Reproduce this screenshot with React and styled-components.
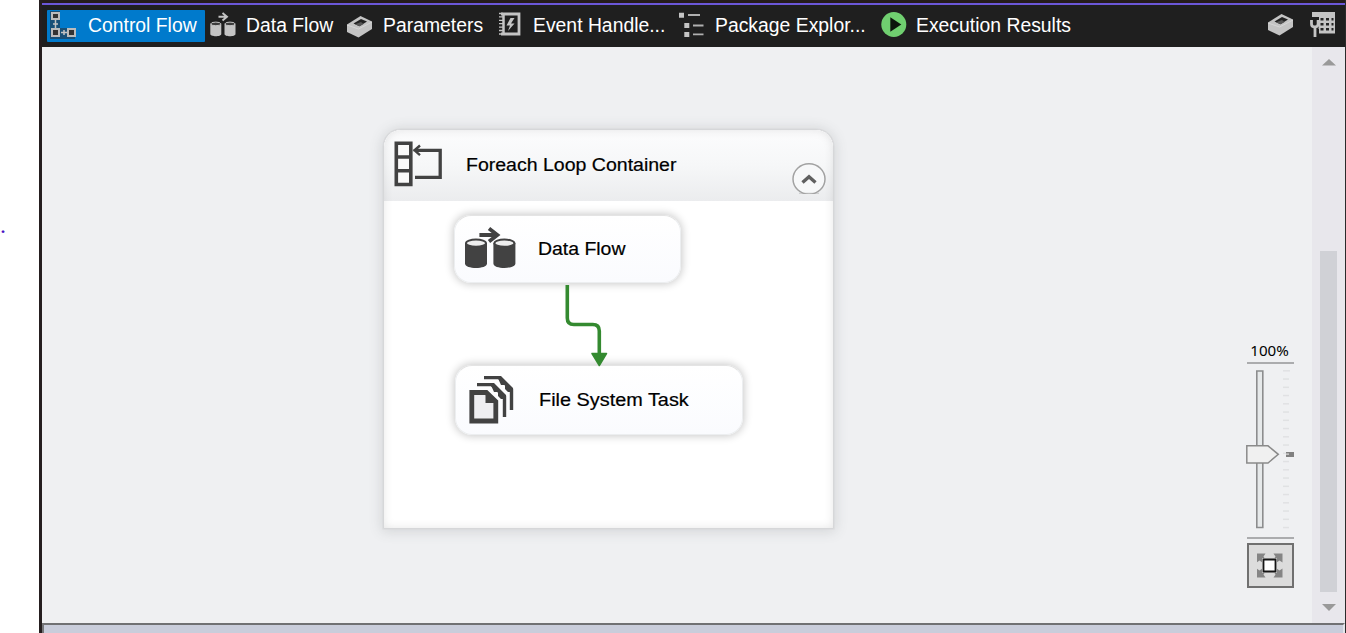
import React from 'react';
import styled, { createGlobalStyle } from 'styled-components';

const GlobalStyle = createGlobalStyle`
  *, *::before, *::after { box-sizing: border-box; }
  body { margin: 0; background: #fff; font-family: "Liberation Sans", Arial, sans-serif; overflow: hidden; }
  svg { display: block; flex: none; }
`;

const Page = styled.div`
  display: flex;
  width: 1346px;
  height: 633px;
  overflow: hidden;
`;

const Gutter = styled.div`
  flex: none;
  width: 39px;
  padding-top: 213px;
  color: #4b12c4;
  font: 24px/24px "Liberation Serif", serif;
`;

const Designer = styled.div`
  flex: 1;
  display: flex;
  flex-direction: column;
  border-left: 3px solid #251e1f;
  border-right: 1px solid #2b2b2b;
  background: #1f1f1f;
`;

const TopEdge = styled.div`
  flex: none;
  height: 5px;
  background: #251c1c;
  border-bottom: 2px solid #6b57d8;
`;

const TabBar = styled.div`
  flex: none;
  display: flex;
  align-items: center;
  height: 42px;
  padding: 0 9px 0 5px;
`;

const Tab = styled.div`
  flex: none;
  display: flex;
  align-items: center;
  width: ${p => p.$width}px;
  height: 32px;
  border-radius: 1px;
  background: ${p => (p.$active ? '#007acc' : 'transparent')};
  color: #fff;
`;

const Label = styled.span`
  display: block;
  flex: none;
  white-space: nowrap;
  font-size: ${p => p.$size}px;
  line-height: 24px;
  transform: scaleX(${p => p.$stretch || 1});
  transform-origin: 0 50%;
`;

const TabLabel = styled(Label)`
  margin-left: 2.5px;
  padding-bottom: 2px;
`;

const Tools = styled.div`
  display: flex;
  gap: 16px;
  margin-left: auto;
  padding-bottom: 2px;
`;

const Body = styled.div`
  flex: 1;
  display: flex;
  min-height: 0;
`;

const Canvas = styled.div`
  position: relative;
  flex: 1;
  background: #eff0f2;
`;

const LoopContainer = styled.section`
  position: absolute;
  left: 341px;
  top: 82px;
  width: 451px;
  height: 400px;
  border: 1px solid #d6d7d9;
  border-radius: 18px 18px 0 0;
  background: #fff;
  box-shadow: 0 0 0 0.6px #d9dadc, 0 1px 13px 1px rgba(80, 85, 90, 0.19);
  overflow: hidden;
  &::after {
    content: '';
    position: absolute;
    inset: 0;
    border-radius: 17px 17px 0 0;
    box-shadow: inset 0 0 10px rgba(0, 0, 0, 0.1);
    pointer-events: none;
  }
`;

const LoopHeader = styled.header`
  display: flex;
  align-items: center;
  height: 70.500px;
  padding: 0 7px 0 9px;
  background: linear-gradient(#fcfcfd, #f6f7f8 50%, #ebecee);
`;

const LoopGlyph = styled.div`
  padding-bottom: 3px;
`;

const NodeLabel = styled(Label)`
  color: #000;
  -webkit-text-stroke: 0.2px currentColor;
`;

const LoopTitle = styled(NodeLabel)`
  margin: 0 auto 0 22.500px;
  padding-bottom: 1px;
`;

const Collapse = styled.div`
  margin-top: 27px;
`;

const Task = styled.div`
  position: absolute;
  left: ${p => p.$x}px;
  top: ${p => p.$y}px;
  display: flex;
  align-items: center;
  gap: ${p => p.$gap}px;
  width: ${p => p.$width}px;
  height: ${p => p.$height}px;
  padding-left: ${p => p.$inset || 0}px;
  border-radius: 17px;
  border: 1px solid #eceef0;
  border-top-color: #e4e4e4;
  background: linear-gradient(#fff, #fafbfe);
  box-shadow: 0 0 9px 1px rgba(0, 0, 0, 0.22);
  color: #111;
`;

const Connector = styled.svg`
  position: absolute;
  left: 518px;
  top: 236px;
`;

const ZoomPanel = styled.div`
  position: absolute;
  left: 1204px;
  top: 293px;
  display: flex;
  flex-direction: column;
  width: 49px;
  padding-left: 1px;
`;

const ZoomLabel = styled(Label)`
  height: 22px;
  padding-left: 3px;
  line-height: 22px;
  font-family: "Noto Sans", sans-serif;
  color: #000;
`;

const Rule = styled.div`
  width: 47px;
  height: 2px;
  background: #abacae;
`;

const FitButton = styled.div`
  display: grid;
  place-items: center;
  width: 47px;
  height: 45px;
  margin-top: 4px;
  border: 2px solid #707070;
  background: #dcdcdc;
`;

const ScrollBar = styled.div`
  flex: none;
  display: flex;
  flex-direction: column;
  align-items: center;
  width: 33px;
  padding: 12px 0;
  background: #e8e7ec;
`;

const ScrollThumb = styled.div`
  width: 17px;
  height: 341px;
  margin: auto 0 12px;
  background: #d0d1d6;
`;

const BottomPane = styled.div`
  flex: none;
  height: 10px;
  border: 2px solid #76777a;
  border-top-color: #707173;
  border-right-color: #e4e5ea;
  border-bottom: 0;
  background: #c9cddb;
`;

const G = '#c4c4c4';

const ControlFlowIcon = () => (
  <svg width="38" height="32">
    <path d="M3 1h10v17h15v11H3z" fill="#25394a" opacity=".65" />
    <g fill="#333" stroke="#bbb" strokeWidth="2">
      <path d="M5.500 2.500h7v6h-7zM5.500 18.500h7v7h-7zM21.500 18.500h7v7h-7z" transform="translate(-.5 .5)" />
    </g>
    <path d="M8.500 10v8M6 14h5M14 22.500h6M17 20v5" stroke="#c4c4c4" strokeWidth="1.500" />
  </svg>
);

const DataFlowIcon = ({ color = G, inner = '#3b3b3b', width = 38, height = 32, viewBox = '0 0 38 32', arrow = 'M13.500 6.800h7.500M17.500 3l4.500 3.800-4.500 3.800' }) => (
  <svg width={width} height={height} viewBox={viewBox}>
    <path d="M5.300 13.800v10.200c0 3 11 3 11 0V13.800zM19.500 13.800v10.200c0 3 11 3 11 0V13.800z" fill={color} />
    <ellipse cx="10.800" cy="13.900" rx="5" ry="1.800" fill={inner} stroke={color} strokeWidth="1" />
    <ellipse cx="25" cy="13.900" rx="5" ry="1.800" fill={inner} stroke={color} strokeWidth="1" />
    <path d={arrow} fill="none" stroke={color} strokeWidth="1.900" />
  </svg>
);

const BoxShape = () => (
  <>
    <path d="M0 9.500 13.500 1 25 6.500V14L11.500 22.500 0 17z" fill={G} />
    <path d="M6.500 8.500 14 4l6 2.500-7.500 4.800z" fill="#222" />
    <path d="M8 9.200 14 7l2.500 2-4 2.300z" fill="#555" />
    <path d="M0 10 11.500 14 25 7" fill="none" stroke="#ddd" strokeWidth=".7" />
  </>
);

const BoxIcon = () => (
  <svg width="38" height="32"><g transform="translate(5 5)"><BoxShape /></g></svg>
);

const EventIcon = () => (
  <svg width="38" height="32">
    <path d="M9 4h18v20H9" fill="none" stroke={G} strokeWidth="2.800" />
    <path d="M11.500 3v22" stroke={G} strokeWidth="2.500" />
    <path d="M7 3.500h4M7 6.900h4M7 10.300h4M7 13.700h4M7 17.100h4M7 20.500h4M7 24h4" stroke={G} strokeWidth="1.300" />
    <path d="m18.500 8-4 7.500h3.500l-2 5.500 6.500-7.500h-3.500l3.500-5.500z" fill={G} />
  </svg>
);

const ExplorerIcon = () => (
  <svg width="38" height="32">
    <path d="M5 2.700h5v5H5zM10.300 13h5v5h-5zM10.300 22h5v5h-5z" fill={G} />
    <path d="M14 5h12M19 15.500h10.500M19 24.300h10.500" stroke="#b0b0b0" strokeWidth="1.800" />
  </svg>
);

const RunIcon = () => (
  <svg width="38" height="32">
    <circle cx="18.800" cy="14.500" r="12.500" fill="#70cf70" />
    <path d="M15.300 7.300v14.400l11-7.200z" fill="#0c140c" />
  </svg>
);

const GridIcon = () => (
  <svg width="26" height="26">
    <path d="M2 0h23v21.500H9v-5H2z" fill={G} />
    <path d="M10.500 6h3v2.500h-3zM16 6h3v2.500h-3zM21.500 6h2v2.500h-2zM10.500 11h3v2.500h-3zM16 11h3v2.500h-3zM21.500 11h2v2.500h-2zM10.500 16h3v2.500h-3zM16 16h3v2.500h-3zM21.500 16h2v2.500h-2z" fill="#252525" />
    <path d="M0 5h9v10l-2 3H3l-3-3z" fill="#1f1f1f" />
    <path d="M1.500 8v4q0 3 3.300 3t3.300-3V8M5 14v11" fill="none" stroke={G} strokeWidth="2.800" />
  </svg>
);

const LoopIcon = () => (
  <svg width="50" height="48">
    <g fill="#fafafa" stroke="#424242" strokeWidth="3.600">
      <path d="M3.300 3.300h14.500v41.200H3.300zM3 17h15M3 30.700h15" />
      <path d="M23 10.300h24.200v27H22" fill="none" strokeWidth="3.300" />
    </g>
    <path d="M20.500 10.300h8M27 5.500l-5.500 4.800 5.500 4.800" fill="none" stroke="#424242" strokeWidth="2.400" />
  </svg>
);

const FilesIcon = () => (
  <svg width="46" height="50">
    <g fill="none" stroke="#424242" strokeWidth="3.400">
      <path d="M15 2.600h15L42.500 14.500V35" />
      <path d="M8 9.600h14.500L35.500 21.500V42" />
    </g>
    <path d="M28 1h4l12 12v4h-5l-3-3v-4h-4zM21 8h4l12 12v4h-5l-3-3v-4h-4z" fill="#424242" />
    <path d="M2.800 17.500h14.500l9.500 9v19.500h-24z" fill="#eeeef1" stroke="#424242" strokeWidth="4.800" />
    <path d="M16.500 16v12h12z" fill="#424242" />
  </svg>
);

const ChevronButton = () => (
  <svg width="34" height="31">
    <ellipse cx="17" cy="16" rx="16" ry="15.200" fill="#f7f8f9" stroke="#a2a2a2" strokeWidth="1.500" />
    <path d="M7 30.300h20" stroke="#a8a8a8" strokeWidth="1.200" opacity=".5" />
    <path d="m10.500 19.500 6.500-5.800 6.500 5.800" fill="none" stroke="#606060" strokeWidth="3.400" />
  </svg>
);

const Slider = () => (
  <svg width="49" height="173" viewBox="1247 364 49 173">
    {Array.from({ length: 20 }, (_, i) => (
      <path key={i} d={`M1283 ${370.8 + i * 8.25}h${i ? 6 : 7}`} stroke="#e0e1e3" strokeWidth="1.500" />
    ))}
    <path d="M1256.800 371h6v156.500h-6z" fill="#e6e9ea" stroke="#8c8d8e" strokeWidth="1.600" />
    <path d="M1246.800 445.800h21.200l10.300 8.500-10.300 8.700h-21.200z" fill="#f0f0f0" stroke="#8a8a8a" strokeWidth="1.500" />
    <path d="M1286 452h8v5h-8z" fill="#808080" />
    <path d="M1286 453.500h3v1.200h-3z" fill="#ddd" />
  </svg>
);

const SliderRow = styled.div`
  height: 173px;
  svg { overflow: visible; }
`;

const FitIcon = () => (
  <svg width="27" height="25" viewBox="0.500 0.500 27 25">
    <path d="M0 1h9l-2 3 2 3-3 3-3-2-3 2zM26 1h-9l2 3-2 3 3 3 3-2 3 2zM0 25h9l-2-3 2-3-3-3-3 2-3-2zM26 25h-9l2-3-2-3 3-3 3 2 3-2z" fill="#858585" />
    <path d="M5.500 5.500h15v15h-15z" fill="#dcdcdc" />
    <path d="M7 7h12v12H7z" fill="#fff" stroke="#151515" strokeWidth="1.800" />
  </svg>
);

const tabs = [
  { text: 'Control Flow', width: 158, icon: <ControlFlowIcon />, active: true },
  { text: 'Data Flow', width: 137, icon: <DataFlowIcon /> },
  { text: 'Parameters', width: 150, icon: <BoxIcon /> },
  { text: 'Event Handle...', width: 182, icon: <EventIcon /> },
  { text: 'Package Explor...', width: 201, icon: <ExplorerIcon /> },
  { text: 'Execution Results', width: 210, icon: <RunIcon /> },
];

export default function App() {
  return (
    <Page>
      <GlobalStyle />
      <Gutter>.</Gutter>
      <Designer>
        <TopEdge />
        <TabBar>
          {tabs.map(t => (
            <Tab key={t.text} $width={t.width} $active={t.active}>
              {t.icon}
              <TabLabel $size={20} $stretch={0.968}>{t.text}</TabLabel>
            </Tab>
          ))}
          <Tools>
            <svg width="26" height="26"><g transform="translate(0 1)"><BoxShape /></g></svg>
            <GridIcon />
          </Tools>
        </TabBar>
        <Body>
          <Canvas>
            <LoopContainer>
              <LoopHeader>
                <LoopGlyph><LoopIcon /></LoopGlyph>
                <LoopTitle $size={17.5} $stretch={1.115}>Foreach Loop Container</LoopTitle>
                <Collapse><ChevronButton /></Collapse>
              </LoopHeader>
            </LoopContainer>
            <Task $x={412} $y={168} $width={227} $height={68} $gap={11}>
              <DataFlowIcon
                color="#424242"
                inner="#eee"
                width={72}
                height={60}
                viewBox="0.300 1.800 36 30"
                arrow="M12.500 9.800h8M17.300 6.500l4.200 3.300-4.200 3.300"
              />
              <NodeLabel $size={17.5} $stretch={1.11}>Data Flow</NodeLabel>
            </Task>
            <Task $x={413} $y={318} $width={288} $height={70} $gap={24} $inset={13}>
              <FilesIcon />
              <NodeLabel $size={17.5} $stretch={1.135}>File System Task</NodeLabel>
            </Task>
            <Connector width="50" height="86" viewBox="560 283 50 86">
              <path d="M567.300 285v33q0 6.500 6.500 6.500h19q6.500 0 6.500 6.500v24" fill="none" stroke="#348a30" strokeWidth="3.600" />
              <path d="M592 353.500h14.500l-7.200 12z" fill="#348a30" stroke="#348a30" strokeWidth="1.500" strokeLinejoin="round" />
            </Connector>
            <ZoomPanel>
              <ZoomLabel $size={14} $stretch={1.08}>100%</ZoomLabel>
              <Rule />
              <SliderRow><Slider /></SliderRow>
              <Rule />
              <FitButton><FitIcon /></FitButton>
            </ZoomPanel>
          </Canvas>
          <ScrollBar>
            <svg width="14" height="7"><path d="M0 6.500 7 0l7 6.500z" fill="#999" /></svg>
            <ScrollThumb />
            <svg width="14" height="7"><path d="M0 0h14L7 7z" fill="#999" /></svg>
          </ScrollBar>
        </Body>
        <BottomPane />
      </Designer>
    </Page>
  );
}
